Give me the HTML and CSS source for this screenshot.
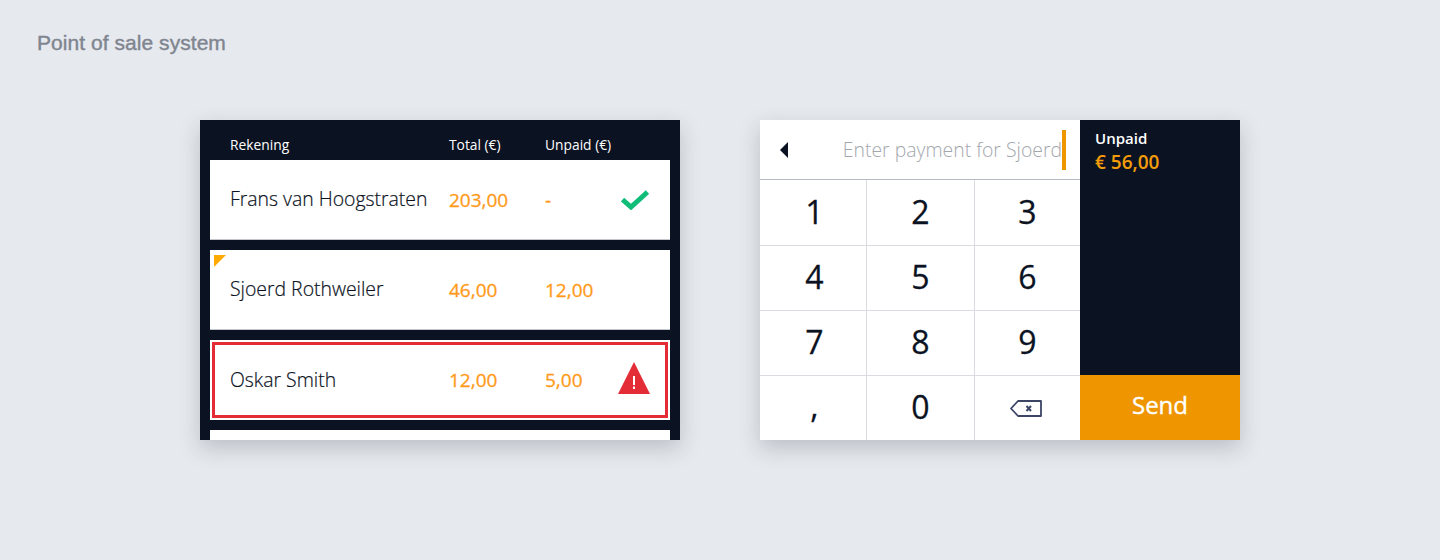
FILE: index.html
```html
<!DOCTYPE html>
<html lang="en">
<head>
  <meta charset="UTF-8">
  <title>Point of sale system</title>
  <link rel="stylesheet" href="styles.css">
</head>
<body>
  <h1 class="page-title">Point of sale system</h1>

  <div class="screens">
    <div class="accounts">
      <div class="account-head">
        <span>Rekening</span>
        <span>Total (€)</span>
        <span>Unpaid (€)</span>
      </div>

      <div class="account-row">
        <span class="account-name">Frans van Hoogstraten</span>
        <span class="amount">203,00</span>
        <span class="amount">-</span>
        <svg class="icon-check" width="28" height="20" viewBox="0 0 28 20">
          <path d="M1.500 9.500 L10 17 L26.500 2" fill="none" stroke="#10bd78" stroke-width="5"/>
        </svg>
      </div>

      <div class="account-row">
        <span class="corner-flag"></span>
        <span class="account-name">Sjoerd Rothweiler</span>
        <span class="amount">46,00</span>
        <span class="amount">12,00</span>
      </div>

      <div class="account-row account-alert">
        <span class="account-name">Oskar Smith</span>
        <span class="amount">12,00</span>
        <span class="amount">5,00</span>
        <svg class="icon-warning" width="32" height="32" viewBox="0 0 32 32">
          <path d="M16 0 L32 32 H0 Z" fill="#e32c35"/>
          <rect x="15" y="14" width="2" height="9" fill="#fff"/>
          <rect x="15" y="24.500" width="2" height="2.500" fill="#fff"/>
        </svg>
      </div>

      <div class="account-row"></div>
    </div>

    <div class="payment">
      <div class="entry">
        <div class="entry-field">
          <span class="back-arrow"></span>
          <span class="entry-text">Enter payment for Sjoerd</span>
          <span class="entry-caret"></span>
        </div>
        <div class="keypad">
          <div class="key">1</div>
          <div class="key">2</div>
          <div class="key">3</div>
          <div class="key">4</div>
          <div class="key">5</div>
          <div class="key">6</div>
          <div class="key">7</div>
          <div class="key">8</div>
          <div class="key">9</div>
          <div class="key key-comma">,</div>
          <div class="key">0</div>
          <div class="key">
            <svg class="icon-backspace" width="32" height="17" viewBox="0 0 32 17">
              <path d="M1 8.500 L8 1 H31 V16 H8 Z" fill="none" stroke="#3d4566" stroke-width="1.800" stroke-linejoin="round"/>
              <path d="M16.500 6 L21 11 M21 6 L16.500 11" fill="none" stroke="#3d4566" stroke-width="2"/>
            </svg>
          </div>
        </div>
      </div>

      <div class="summary">
        <div class="summary-info">
          <div class="summary-label">Unpaid</div>
          <div class="summary-value">€ 56,00</div>
        </div>
        <div class="send-button">Send</div>
      </div>
    </div>
  </div>
</body>
</html>
```

FILE: styles.css
```css
body {
  margin: 0;
  height: 560px;
  overflow: hidden;
  background-color: #e6e9ee;
  font-family: 'Open Sans', sans-serif;
  color: #0b1222;
}
.page-title {
  margin: 0;
  padding: 31px 0 0 37px;
  font-family: 'Liberation Sans', sans-serif;
  font-size: 21px;
  line-height: 24px;
  letter-spacing: 0.05px;
  font-weight: 400;
  color: #7f858f;
  -webkit-text-stroke: 0.4px #7f858f;
}
.screens {
  display: flex;
  justify-content: center;
  gap: 80px;
  margin-top: 65px;
}
.accounts, .payment {
  width: 480px;
  height: 320px;
  overflow: hidden;
  box-shadow: 0 8px 20px rgba(40,50,60,0.22);
}
.accounts {
  box-sizing: border-box;
  padding: 0 10px;
  background-color: #0b1222;
}
.account-head, .account-row {
  display: grid;
  grid-template-columns: 219px 96px 1fr;
  align-items: center;
  padding-left: 20px;
}
.account-head {
  height: 40px;
  padding-top: 9px;
  box-sizing: border-box;
  font-size: 13.8px;
  color: #fff;
}
.account-row {
  position: relative;
  box-sizing: border-box;
  height: 80px;
  padding-bottom: 2px;
  margin-bottom: 10px;
  background-color: #fff;
  border-bottom: 1px solid #c3c7cc;
}
.account-name {
  font-size: 19.4px;
  font-weight: 300;
  color: #0b1222;
  -webkit-text-stroke: 0.2px #0b1222;
}
.amount {
  margin-top: 2px;
  font-size: 19px;
  color: #ff9a1a;
  -webkit-text-stroke: 0.3px #ff9a1a;
}
.icon-check {
  position: absolute;
  left: 411px;
  top: 30px;
}
.icon-warning {
  position: absolute;
  left: 408px;
  top: 22px;
}
.corner-flag {
  position: absolute;
  left: 4px;
  top: 5px;
  border-top: 12px solid #ffaa00;
  border-right: 12px solid transparent;
}
.account-alert {
  border-bottom: none;
  outline: 3px solid #e32c35;
  outline-offset: -5px;
}
.payment {
  display: flex;
}
.entry {
  width: 320px;
  background-color: #fff;
}
.entry-field {
  box-sizing: border-box;
  display: flex;
  align-items: center;
  height: 60px;
  padding: 0 14px 0 20px;
  border-bottom: 1px solid #b5bac2;
}
.back-arrow {
  border-top: 8px solid transparent;
  border-bottom: 8px solid transparent;
  border-right: 8px solid #0b1222;
}
.entry-text {
  margin-left: auto;
  font-size: 19.4px;
  font-weight: 300;
  color: #a3a7ad;
}
.entry-caret {
  width: 4px;
  height: 40px;
  background-color: #ee9500;
}
.keypad {
  display: grid;
  grid-template-columns: 106px 108px 106px;
  grid-auto-rows: 65px;
}
.key {
  box-sizing: border-box;
  display: flex;
  align-items: center;
  justify-content: center;
  padding-bottom: 3px;
  font-size: 32px;
  -webkit-text-stroke: 0.3px #0b1222;
  border-left: 1px solid #d9dbe0;
  border-top: 1px solid #d9dbe0;
}
.key:nth-child(3n+1) {
  border-left: none;
  padding-left: 3px;
}
.key:nth-child(-n+3) {
  border-top: none;
}
.key-comma {
  padding-bottom: 6px;
}
.icon-backspace {
  margin-right: 4px;
  margin-top: 3px;
}
.summary {
  display: flex;
  flex-direction: column;
  width: 160px;
  background-color: #0b1222;
}
.summary-info {
  flex: 1;
  padding: 8px 15px;
}
.summary-label {
  font-size: 15px;
  line-height: 20px;
  font-weight: 600;
  color: #fff;
}
.summary-value {
  font-size: 19px;
  line-height: 28px;
  font-weight: 600;
  color: #f39c0a;
}
.send-button {
  height: 65px;
  line-height: 60px;
  text-align: center;
  font-size: 24px;
  -webkit-text-stroke: 0.4px #fff;
  color: #fff;
  background-color: #ee9500;
}
```
